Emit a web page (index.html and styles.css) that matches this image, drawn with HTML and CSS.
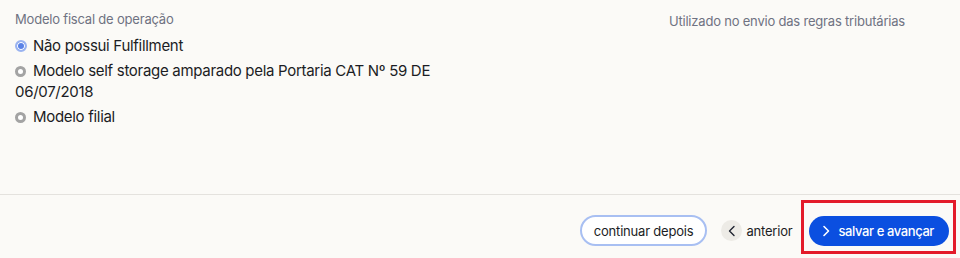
FILE: index.html
```html
<!DOCTYPE html>
<html lang="pt-BR">
<head>
    <meta charset="UTF-8">
    <title>Modelo fiscal</title>
    <link rel="stylesheet" href="styles.css">
</head>
<body>
    <div class="step">
        <section class="step-body">
            <div class="field">
                <div class="field-label">Modelo fiscal de operação</div>
                <label class="radio"><span class="radio-dot checked"></span>Não possui Fulfillment</label>
                <label class="radio"><span class="radio-dot"></span>Modelo self storage amparado pela Portaria CAT Nº 59 DE 06/07/2018</label>
                <label class="radio"><span class="radio-dot"></span>Modelo filial</label>
            </div>
            <p class="field-hint">Utilizado no envio das regras tributárias</p>
        </section>

        <footer class="step-footer">
            <button class="btn btn-outline">continuar depois</button>
            <button class="btn btn-link">
                <span class="btn-circle">
                    <svg width="10" height="12" viewBox="0 0 10 12"><path d="M7 1.5 L2.5 6 L7 10.5" fill="none" stroke="#1f2430" stroke-width="1.4" stroke-linecap="round" stroke-linejoin="round"/></svg>
                </span>
                anterior
            </button>
            <div class="highlight-wrap">
                <button class="btn btn-primary">
                    <svg width="10" height="12" viewBox="0 0 10 12"><path d="M3 1.5 L7.5 6 L3 10.5" fill="none" stroke="#ffffff" stroke-width="1.6" stroke-linecap="round" stroke-linejoin="round"/></svg>
                    salvar e avançar
                </button>
                <span class="highlight"></span>
            </div>
        </footer>
    </div>
</body>
</html>
```

FILE: styles.css
```css
* {
    margin: 0;
    padding: 0;
    box-sizing: border-box;
}

body {
    font-family: 'Inter', 'Noto Sans', sans-serif;
    background: #fbfaf7;
    color: #1b1d24;
    width: 960px;
    height: 258px;
    overflow: hidden;
}

.step {
    display: flex;
    flex-direction: column;
    height: 258px;
}

.step-body {
    height: 194px;
    display: flex;
    justify-content: space-between;
    padding: 11px 55px 0 15px;
}

.field {
    width: 430px;
    display: flex;
    flex-direction: column;
}

.field-label {
    font-size: 13px;
    color: #6f7282;
    line-height: 17px;
    margin-bottom: 7px;
    letter-spacing: -0.2px;
}

.radio {
    display: block;
    font-size: 15px;
    line-height: 21px;
    margin-bottom: 4px;
    letter-spacing: -0.3px;
}

.radio-dot {
    display: inline-block;
    width: 11px;
    height: 11px;
    border-radius: 50%;
    border: 3px solid #a3a3a3;
    background: #ffffff;
    margin-right: 7px;
    vertical-align: -0.5px;
}

.radio-dot.checked {
    width: 12px;
    height: 12px;
    border: 2px solid #9ab3f0;
    background: #5a82e6;
    box-shadow: inset 0 0 0 1px #ffffff;
    margin-right: 6px;
    vertical-align: -1px;
}

.field-hint {
    font-size: 13px;
    color: #6f7282;
    line-height: 17px;
    padding-top: 2px;
    letter-spacing: -0.2px;
}

.step-footer {
    flex: 1;
    border-top: 1px solid #e4e2de;
    display: flex;
    align-items: center;
    justify-content: flex-end;
    padding: 8px 11px 0 0;
    gap: 14px;
}

.btn {
    font-family: inherit;
    font-size: 13px;
    border: none;
    background: none;
    cursor: pointer;
    display: flex;
    align-items: center;
    letter-spacing: -0.2px;
    color: #1b1d24;
}

.btn-outline {
    height: 31px;
    padding: 0 12px;
    border: 2px solid #a8bff2;
    border-radius: 16px;
    background: #ffffff;
}

.btn-link {
    gap: 4px;
    margin-right: 3px;
}

.btn-circle {
    width: 21px;
    height: 21px;
    border-radius: 50%;
    background: #edebe6;
    display: flex;
    align-items: center;
    justify-content: center;
}

.btn-primary {
    height: 30px;
    padding: 0 15px 0 12px;
    gap: 7px;
    border-radius: 15px;
    background: #0b4fe0;
    color: #ffffff;
    font-weight: 500;
    letter-spacing: -0.4px;
}

.highlight-wrap {
    position: relative;
}

.highlight {
    position: absolute;
    left: -8px;
    right: -7px;
    top: -16px;
    bottom: -8px;
    border: 3px solid #e31b2a;
    pointer-events: none;
}
```
